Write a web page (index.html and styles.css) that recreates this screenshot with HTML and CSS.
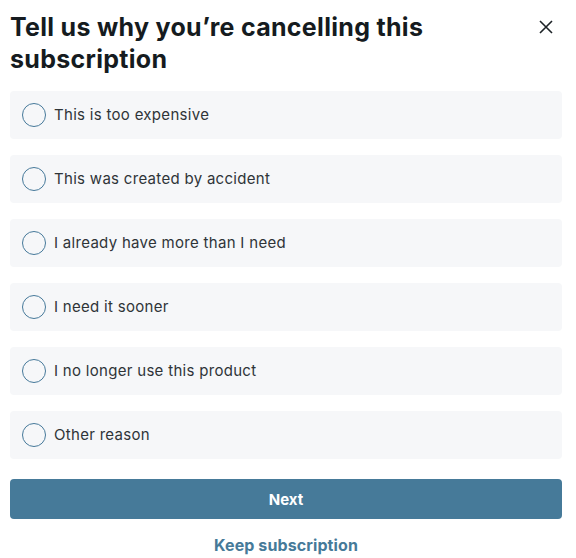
FILE: index.html
```html
<!DOCTYPE html>
<html>
<head>
<meta charset="utf-8">
<link rel="stylesheet" href="styles.css">
</head>
<body>
<div class="dialog">
  <div class="header">
    <h1 class="title">Tell us why you’re cancelling this subscription</h1>
    <button class="close" aria-label="Close">
      <svg width="14" height="14" viewBox="0 0 14 14"><path d="M1 1L13 13M13 1L1 13" stroke="#1d2327" stroke-width="1.6" fill="none"/></svg>
    </button>
  </div>
  <div class="options">
    <label class="option"><span class="radio"></span><span class="label">This is too expensive</span></label>
    <label class="option"><span class="radio"></span><span class="label">This was created by accident</span></label>
    <label class="option"><span class="radio"></span><span class="label">I already have more than I need</span></label>
    <label class="option"><span class="radio"></span><span class="label">I need it sooner</span></label>
    <label class="option"><span class="radio"></span><span class="label">I no longer use this product</span></label>
    <label class="option"><span class="radio"></span><span class="label">Other reason</span></label>
  </div>
  <button class="next">Next</button>
  <a class="keep" href="#">Keep subscription</a>
</div>
</body>
</html>
```
FILE: styles.css
```css
* { box-sizing: border-box; }
html, body { margin: 0; padding: 0; background: #fff; }
body { font-family: "Inter", "DejaVu Sans", sans-serif; color: #1d2327; }
.dialog { width: 552px; margin-left: 10px; padding-top: 11px; display: flex; flex-direction: column; }
.header { display: flex; justify-content: space-between; align-items: flex-start; }
.title { margin: 0; font-size: 25px; line-height: 32px; font-weight: 700; letter-spacing: 0.3px; width: 440px; color: #151b20; }
.close { background: none; border: 0; padding: 0; margin-top: 9px; margin-right: 9px; width: 14px; height: 14px; display: flex; }
.options { display: flex; flex-direction: column; gap: 16px; margin-top: 16px; }
.option { height: 48px; background: #f6f7f9; border-radius: 4px; display: flex; align-items: center; padding-left: 12px; gap: 8px; }
.radio { width: 24px; height: 24px; border: 1.5px solid #46799a; border-radius: 50%; flex: none; }
.label { font-size: 15px; color: #2f3438; letter-spacing: 0.3px; padding-bottom: 1px; }
.next { margin-top: 20px; height: 40px; border: 0; border-radius: 4px; background: #467a99; color: #fff; font-family: inherit; font-size: 15px; font-weight: 700; }
.keep { margin-top: 16px; text-align: center; color: #467a99; font-size: 16px; font-weight: 700; letter-spacing: 0.1px; text-decoration: none; }
```
